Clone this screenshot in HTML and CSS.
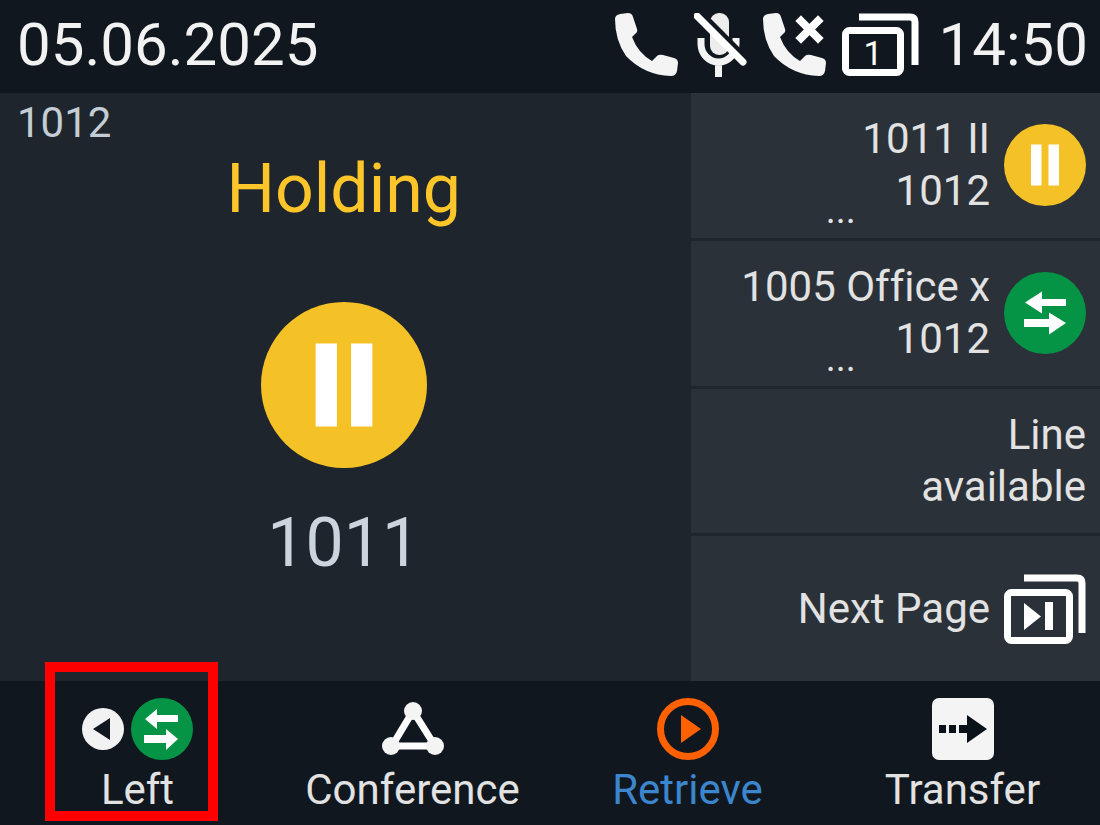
FILE: index.html
```
<!DOCTYPE html>
<html lang="en">
<head>
  <meta charset="UTF-8">
  <meta name="viewport" content="width=device-width, initial-scale=1">
  <title>Phone - Holding</title>
  <link rel="stylesheet" href="styles.css">
</head>
<body>
  <!-- shared icons -->
  <svg class="sprite" aria-hidden="true">
    <symbol id="pause" viewBox="0 0 82 82">
      <circle cx="41" cy="41" r="41" fill="#f4c226"/>
      <path d="M27 20.500h10.500v41H27zM44.500 20.500H55v41H44.500z" fill="#fff"/>
    </symbol>
    <symbol id="swap" viewBox="0 0 82 82">
      <circle cx="41" cy="41" r="41" fill="#059446"/>
      <path d="M21 30.500l17-11V27h24v7H38v7.500zM62 51L45 40.500V47H20v8h25v7.500z" fill="#fff"/>
    </symbol>
    <symbol id="handset" viewBox="0 0 63 63">
      <path d="M0 6Q0 2 5 1L13 0Q17 0 18 4L22 16Q23 19 20 21L17 24Q23 40 37 48L42 43Q44 41 48 42L59 45Q63 46 63 50L62 58Q61 63 56 63Q29 62 11 43Q0 27 0 6Z" fill="#f4f4f4"/>
    </symbol>
  </svg>

  <div class="screen">
    <header>
      <span class="clock">05.06.2025</span>
      <div class="status">
        <svg width="63" height="63" role="img" aria-label="Call"><use href="#handset"/></svg>
        <svg width="53" height="64" viewBox="0 0 53 64" role="img" aria-label="Muted">
          <rect x="16" y="0" width="19" height="42" rx="9" fill="#ededed"/>
          <path d="M7 25v6a17.500 18 0 0 0 35 0v-6M24.500 49v15" fill="none" stroke="#f4f4f4" stroke-width="7"/>
          <path d="M5 1l46 46" stroke="#10171e" stroke-width="10"/>
          <path d="M3 3l46 46" stroke="#fff" stroke-width="7" stroke-linecap="round"/>
        </svg>
        <svg width="63" height="63" viewBox="0 0 63 63" role="img" aria-label="Missed call">
          <use href="#handset"/>
          <path d="M38 8l17 17M55 8L38 25" stroke="#fff" stroke-width="8" stroke-linecap="square"/>
        </svg>
        <svg width="77" height="63" viewBox="0 0 77 63" role="img" aria-label="Page 1">
          <path d="M17 4h51q5 0 5 5v43" fill="none" stroke="#fff" stroke-width="7"/>
          <rect x="3.500" y="17.500" width="55" height="42" rx="4" fill="none" stroke="#fff" stroke-width="7"/>
          <text class="page-no" x="31" y="52">1</text>
        </svg>
      </div>
      <span class="clock">14:50</span>
    </header>

    <main>
      <section class="call">
        <p class="account">1012</p>
        <h1>Holding</h1>
        <svg class="call-icon" aria-hidden="true"><use href="#pause"/></svg>
        <p class="number">1011</p>
      </section>

      <aside class="lines">
        <button class="line">
          <span class="line-text">1011 II<br>1012<span class="more">...</span></span>
          <svg width="82" height="82" aria-hidden="true"><use href="#pause"/></svg>
        </button>
        <button class="line">
          <span class="line-text">1005 Office x<br>1012<span class="more">...</span></span>
          <svg width="82" height="82" aria-hidden="true"><use href="#swap"/></svg>
        </button>
        <button class="line">
          <span class="line-text">Line<br>available</span>
        </button>
        <button class="line">
          <span class="line-text">Next Page</span>
          <svg width="82" height="70" viewBox="0 0 82 70" aria-hidden="true">
            <path d="M20 4h53q5 0 5 5v50" fill="none" stroke="#fff" stroke-width="7"/>
            <rect x="3.500" y="18.500" width="62" height="48" rx="4" fill="none" stroke="#fff" stroke-width="7"/>
            <path d="M20 29l17 13.500L20 56zM41 28h8v28h-8z" fill="#fff"/>
          </svg>
        </button>
      </aside>
    </main>

    <footer>
      <button class="key marked">
        <svg width="111" height="62" viewBox="0 0 111 62" aria-hidden="true">
          <circle cx="21" cy="31" r="21" fill="#f2f2f2"/>
          <path d="M11 31l17-11v22z" fill="#10171e"/>
          <circle cx="80" cy="31" r="31" fill="#059446"/>
          <path d="M63 21l12-10v6h21v7H75v7zM96 41L84 31v6H62v8h22v7z" fill="#fff"/>
        </svg>
        Left
      </button>
      <button class="key">
        <svg width="62" height="62" viewBox="0 0 62 62" aria-hidden="true">
          <path d="M31 13L10 48h43z" fill="none" stroke="#fff" stroke-width="7"/>
          <g fill="#f4f4f4">
            <circle cx="31" cy="13" r="9"/>
            <circle cx="9" cy="48" r="9"/>
            <circle cx="53" cy="48" r="9"/>
          </g>
        </svg>
        Conference
      </button>
      <button class="key active">
        <svg width="62" height="62" viewBox="0 0 62 62" aria-hidden="true">
          <circle cx="31" cy="31" r="27.500" fill="none" stroke="#ff6000" stroke-width="7"/>
          <path d="M24 17l20 14-20 14z" fill="#ff6000"/>
        </svg>
        Retrieve
      </button>
      <button class="key">
        <svg width="62" height="62" viewBox="0 0 62 62" aria-hidden="true">
          <rect width="62" height="62" rx="7" fill="#f4f4f4"/>
          <path d="M7 27h7v8H7zM17 27h7v8h-7zM27 27h8V17l20 14-20 14V35h-8z" fill="#0b1118"/>
        </svg>
        Transfer
      </button>
    </footer>
  </div>
</body>
</html>
```
FILE: styles.css
```
*, *::after {
  box-sizing: border-box;
}
body {
  margin: 0;
  background-color: #10171e;
  color: #e2e2e2;
  font-family: Roboto, Arial, sans-serif;
  font-size: 42px;
  line-height: 52px;
  font-variant-ligatures: none;
}
svg {
  display: block;
  flex: none;
}
.sprite {
  position: absolute;
  width: 0;
  height: 0;
}
.screen {
  display: grid;
  grid-template-rows: 93px 1fr 144px;
  min-height: 100vh;
}
header {
  display: flex;
  align-items: center;
  gap: 20px;
  padding: 0 12px 4px 17px;
}
.clock {
  font-size: 60px;
  color: #f2f2f2;
}
.status {
  display: flex;
  align-items: center;
  gap: 16px;
  margin-left: auto;
}
.page-no {
  font-size: 34px;
  fill: #fff;
  text-anchor: middle;
}
main {
  display: grid;
  grid-template-columns: 22fr 13fr;
  background-color: #1f252c;
}
.call {
  display: flex;
  flex-direction: column;
  align-items: center;
  padding: 4px 4px 0 0;
}
.account {
  align-self: flex-start;
  margin: 0 0 0 17px;
  color: #c4ccd6;
}
h1 {
  margin: 0;
  font-size: 68px;
  font-weight: 400;
  line-height: 80px;
  color: #fcc62a;
}
.call-icon {
  width: 166px;
  height: 166px;
  margin: 73px 0 35px;
}
.number {
  margin: 0;
  font-size: 68px;
  line-height: 80px;
  color: #ccd4dd;
}
.lines {
  display: grid;
  grid-template-rows: repeat(4, 1fr);
  gap: 3px;
}
button {
  margin: 0;
  border: none;
  background: none;
  color: inherit;
  font: inherit;
  font-variant-ligatures: none;
  cursor: pointer;
}
.line {
  display: flex;
  align-items: center;
  gap: 14px;
  padding: 0 14px 0 0;
  background-color: #2b3138;
  text-align: right;
}
.line-text {
  flex: 1;
}
/* third row of the label is cut off */
.more {
  display: block;
  height: 0;
  margin-top: -17px;
  margin-bottom: 17px;
  font-size: 38px;
  line-height: 20px;
  text-align: center;
}
footer {
  display: grid;
  grid-template-columns: repeat(4, 1fr);
}
.key {
  display: flex;
  flex-direction: column;
  align-items: center;
  justify-content: flex-start;
  gap: 4px;
  padding: 17px 0 0;
}
.active {
  color: #3b86cc;
}
.marked {
  position: relative;
}
.marked::after {
  content: "";
  position: absolute;
  top: -19px;
  left: 45px;
  width: 173px;
  height: 159px;
  border: 10px solid #f00;
}
```
